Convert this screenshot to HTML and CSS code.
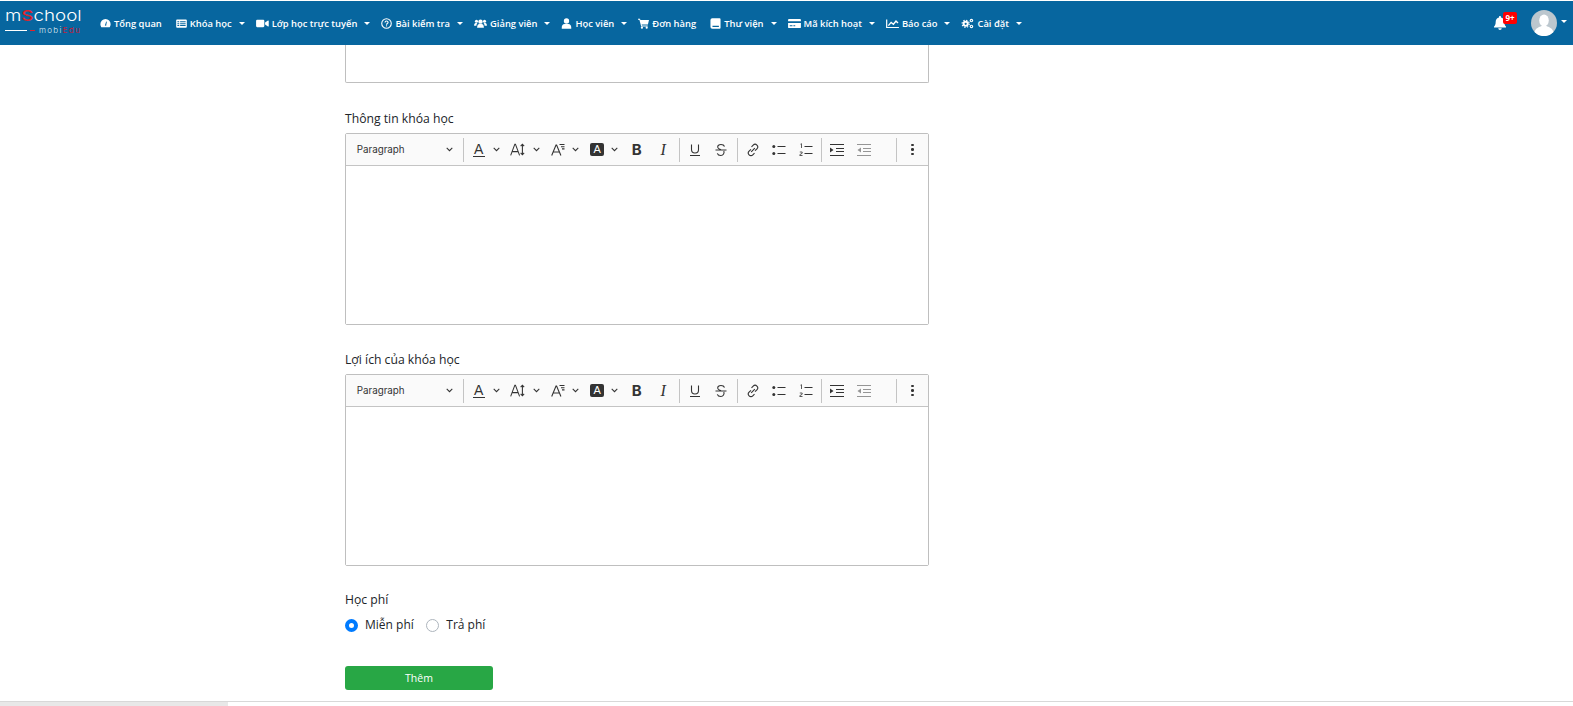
FILE: index.html
```html
<!DOCTYPE html>
<html lang="vi">
<head>
<meta charset="utf-8">
<title>mSchool</title>
<link rel="stylesheet" href="styles.css">
</head>
<body>
<header class="navbar">
  <a class="brand">
    <span class="brand-top">m<b>S</b>chool</span>
    <span class="brand-bottom"><i class="line"></i><i class="dash"></i><span class="mobi">mobi<b>Edu</b></span></span>
  </a>
  <nav class="menu">
    <a class="item"><svg class="ic" viewBox="0 0 12 12"><path d="M6 1.200a5.600 5.600 0 0 0-5.600 5.600c0 1.200.4 2.300 1 3.200h9.200c.6-.9 1-2 1-3.200A5.600 5.600 0 0 0 6 1.200z"/><path class="cut" d="M5.300 8.200 6.800 3.800 7.500 4 6.700 8.500z"/></svg>Tổng quan</a>
    <a class="item caret"><svg class="ic" viewBox="0 0 12 12"><path fill-rule="evenodd" d="M1.200 1.500h9.600a1 1 0 0 1 1 1v7a1 1 0 0 1-1 1H1.200a1 1 0 0 1-1-1v-7a1 1 0 0 1 1-1zM1.500 3.500v1.200h2V3.500zm3 0v1.200h6V3.500zm-3 2.200v1h2v-1zm3 0v1h6v-1zm-3 2v1.100h2V7.700zm3 0v1.100h6V7.700z"/></svg>Khóa học</a>
    <a class="item caret"><svg class="ic wide" viewBox="0 0 14 12"><rect x="0" y="2" width="9" height="8" rx="1.200"/><path d="M9.800 5 13 2.800c.4-.2.800 0 .8.500v5.400c0 .5-.4.700-.8.500L9.800 7z"/></svg>Lớp học trực tuyến</a>
    <a class="item caret"><svg class="ic" viewBox="0 0 12 12"><circle cx="6" cy="6" r="5.200" fill="none" stroke="#fff" stroke-width="1.200"/><path fill="none" stroke="#fff" stroke-width="1.200" d="M4.400 4.900c0-2.100 3.300-2.100 3.300-.1 0 1.200-1.700 1.200-1.700 2.500"/><rect x="5.400" y="8" width="1.200" height="1.200"/></svg>Bài kiểm tra</a>
    <a class="item caret"><svg class="ic wide" viewBox="0 0 14 12"><circle cx="7" cy="4" r="2.400"/><path d="M3.300 10.500c0-2.700 1.200-3.900 2.400-3.900h2.600c1.200 0 2.400 1.200 2.400 3.900z"/><circle cx="2.600" cy="3.600" r="1.700"/><circle cx="11.400" cy="3.600" r="1.700"/><path d="M0 8.500c0-2 .7-3 1.700-3h1.900c-.6.700-1 1.700-1.100 3zM14 8.500c0-2-.7-3-1.700-3h-1.900c.6.700 1 1.700 1.100 3z"/></svg>Giảng viên</a>
    <a class="item caret"><svg class="ic" viewBox="0 0 12 12"><circle cx="6" cy="3.300" r="2.900"/><path d="M.8 11.700c-.3-3.200 1-5.200 3.200-5.200h4c2.200 0 3.500 2 3.200 5.200z"/></svg>Học viên</a>
    <a class="item"><svg class="ic" viewBox="0 0 12 12"><path d="M0 .8h2.200l.4 1.300H12l-1.200 5H4l.3 1h6.300v1.100H3.500L1.500 1.900H0z"/><circle cx="4.300" cy="10.500" r="1.200"/><circle cx="9.500" cy="10.500" r="1.200"/></svg>Đơn hàng</a>
    <a class="item caret"><svg class="ic" viewBox="0 0 12 12"><path fill-rule="evenodd" d="M2.500.3h8a1 1 0 0 1 1 1v9.400a1 1 0 0 1-1 1h-8a2 2 0 0 1-2-2V2.300a2 2 0 0 1 2-2zM2.700 8.500v1.200h7V8.500z"/></svg>Thư viện</a>
    <a class="item caret"><svg class="ic wide" viewBox="0 0 14 12"><path fill-rule="evenodd" d="M1 1h12a1 1 0 0 1 1 1v1.600H0V2a1 1 0 0 1 1-1zM0 5.400h14V10a1 1 0 0 1-1 1H1a1 1 0 0 1-1-1zM1.800 8v1h3V8zm4 0v1h2V8z"/></svg>Mã kích hoạt</a>
    <a class="item caret"><svg class="ic wide" viewBox="0 0 14 12"><path d="M0 1.500h1.300v8.200H14V11H0z"/><path fill="none" stroke="#fff" stroke-width="1.500" d="M2.500 8.300 5.500 4.800l2.500 2 2.800-3.500 2.200 2.200"/></svg>Báo cáo</a>
    <a class="item caret"><svg class="ic wide" viewBox="0 0 14 12"><circle cx="5" cy="6.300" r="3.900" fill="none" stroke="#fff" stroke-width="1.300" stroke-dasharray="1.500 1.560"/><circle cx="5" cy="6.300" r="3.300"/><circle class="cut" cx="5" cy="6.300" r="1.200"/><circle cx="11.300" cy="2.800" r="1.900"/><circle class="cut" cx="11.300" cy="2.800" r=".7"/><circle cx="11.300" cy="9.200" r="1.900"/><circle class="cut" cx="11.300" cy="9.200" r=".7"/></svg>Cài đặt</a>
  </nav>
  <div class="nav-right">
    <span class="bell"><svg viewBox="0 0 14 14"><path d="M7 0c.6 0 1 .4 1 1v.6c2 .4 3.300 2 3.300 4.100 0 3.200 1 4 1.700 4.800v1H1v-1c.7-.8 1.700-1.600 1.700-4.800 0-2.100 1.300-3.700 3.300-4.100V1c0-.6.4-1 1-1z"/><path d="M5.300 12.300h3.400c0 .9-.8 1.600-1.700 1.600s-1.700-.7-1.700-1.600z"/></svg><span class="badge">9+</span></span>
    <span class="avatar"><svg viewBox="0 0 26 26"><circle cx="13" cy="13" r="13" fill="#bcc7ce"/><ellipse cx="13" cy="10.500" rx="4.800" ry="6" fill="#fff"/><path d="M3.500 22c1-4 5-5 7-6h5c2 1 6 2 7 6a13 13 0 0 1-19 0z" fill="#fff"/></svg></span>
    <i class="avatar-caret"></i>
  </div>
</header>

<main class="page">
  <form class="form">
    <div class="stub-box"></div>

    <section class="field">
      <label class="label">Thông tin khóa học</label>
      <div class="editor">
        <div class="toolbar">
          <span class="para">Paragraph<svg class="chev" viewBox="0 0 10 6"><path d="M1 1l4 4 4-4"/></svg></span>
          <i class="sep"></i>
          <span class="tool dd a1"><span class="glyph-a">A</span><svg class="chev" viewBox="0 0 10 6"><path d="M1 1l4 4 4-4"/></svg></span>
          <span class="tool dd a2"><svg class="t" viewBox="0 0 16 13"><path class="s" d="M.7 12.500 5 1h.6l4.300 11.500M2.200 8.700h6.200M12.800 1.500v10M11 3l1.800-2 1.800 2M11 10l1.800 2 1.800-2"/></svg><svg class="chev" viewBox="0 0 10 6"><path d="M1 1l4 4 4-4"/></svg></span>
          <span class="tool dd a3"><svg class="t t3" viewBox="0 0 14 13"><path class="s" d="M.7 12.500 5 2h.6l4.300 10.500M2.200 9h6.200M8.500 1.500h5M10 3.700h3.500M11 5.900h2.500"/></svg><svg class="chev" viewBox="0 0 10 6"><path d="M1 1l4 4 4-4"/></svg></span>
          <span class="tool dd a4"><span class="hl">A</span><svg class="chev" viewBox="0 0 10 6"><path d="M1 1l4 4 4-4"/></svg></span>
          <span class="tool btn b">B</span>
          <span class="tool btn it last">I</span>
          <i class="sep"></i>
          <span class="tool btn"><svg class="t16" viewBox="0 0 14 14"><path class="s" d="M3.500 1.500v5a3.500 3.500 0 0 0 7 0v-5M2 12.500h10"/></svg></span>
          <span class="tool btn last"><svg class="t16" viewBox="0 0 14 14"><path class="s" d="M10.500 3.500C10 2 8.500 1.500 7 1.500c-2 0-3.500 1-3.300 2.800.2 1.500 2.300 2 3.300 2.400M1.500 7h11M9.800 8c.8 2-.5 4.500-3 4.500-1.700 0-3-.7-3.500-2.200"/></svg></span>
          <i class="sep"></i>
          <span class="tool btn"><svg class="t16" viewBox="0 0 14 14"><path class="s" d="M5.500 3.800 7.200 2.100a2.600 2.600 0 0 1 3.700 3.700L9 7.700M8.500 10.200 6.800 11.900a2.600 2.600 0 0 1-3.700-3.700L5 6.300M5.200 8.800 8.800 5.200"/></svg></span>
          <span class="tool btn"><svg class="t16" viewBox="0 0 14 14"><circle cx="1.800" cy="3.500" r="1.500" class="f"/><circle cx="1.800" cy="10.500" r="1.500" class="f"/><path class="s" d="M5.500 3.500h8M5.500 10.500h8"/></svg></span>
          <span class="tool btn last"><svg class="t16" viewBox="0 0 14 14"><path class="s thin" d="M1.500 1.200l1-.5V5M.8 9h2.400l-.1 1.300-2.300 1.400v.8h2.700"/><path class="s" d="M5.500 3.500h8M5.500 10.500h8"/></svg></span>
          <i class="sep"></i>
          <span class="tool btn"><svg class="t16" viewBox="0 0 14 14"><path class="s" d="M0 1.500h14M6 5.500h8M6 8.500h8M0 12.500h14"/><path class="f" d="M0 4.500 3.500 7 0 9.500z"/></svg></span>
          <span class="tool btn dim"><svg class="t16" viewBox="0 0 14 14"><path class="s" d="M0 1.500h14M6 5.500h8M6 8.500h8M0 12.500h14"/><path class="f" d="M4 4.500.5 7 4 9.500z"/></svg></span>
          <span class="grow"></span>
          <i class="sep"></i>
          <span class="more"><i></i><i></i><i></i></span>
        </div>
        <div class="editable"></div>
      </div>
    </section>

    <section class="field">
      <label class="label">Lợi ích của khóa học</label>
      <div class="editor">
        <div class="toolbar">
          <span class="para">Paragraph<svg class="chev" viewBox="0 0 10 6"><path d="M1 1l4 4 4-4"/></svg></span>
          <i class="sep"></i>
          <span class="tool dd a1"><span class="glyph-a">A</span><svg class="chev" viewBox="0 0 10 6"><path d="M1 1l4 4 4-4"/></svg></span>
          <span class="tool dd a2"><svg class="t" viewBox="0 0 16 13"><path class="s" d="M.7 12.500 5 1h.6l4.300 11.500M2.200 8.700h6.200M12.800 1.500v10M11 3l1.800-2 1.800 2M11 10l1.800 2 1.800-2"/></svg><svg class="chev" viewBox="0 0 10 6"><path d="M1 1l4 4 4-4"/></svg></span>
          <span class="tool dd a3"><svg class="t t3" viewBox="0 0 14 13"><path class="s" d="M.7 12.500 5 2h.6l4.300 10.500M2.200 9h6.200M8.500 1.500h5M10 3.700h3.500M11 5.900h2.500"/></svg><svg class="chev" viewBox="0 0 10 6"><path d="M1 1l4 4 4-4"/></svg></span>
          <span class="tool dd a4"><span class="hl">A</span><svg class="chev" viewBox="0 0 10 6"><path d="M1 1l4 4 4-4"/></svg></span>
          <span class="tool btn b">B</span>
          <span class="tool btn it last">I</span>
          <i class="sep"></i>
          <span class="tool btn"><svg class="t16" viewBox="0 0 14 14"><path class="s" d="M3.500 1.500v5a3.500 3.500 0 0 0 7 0v-5M2 12.500h10"/></svg></span>
          <span class="tool btn last"><svg class="t16" viewBox="0 0 14 14"><path class="s" d="M10.500 3.500C10 2 8.500 1.500 7 1.500c-2 0-3.500 1-3.300 2.800.2 1.500 2.300 2 3.300 2.400M1.500 7h11M9.800 8c.8 2-.5 4.500-3 4.500-1.700 0-3-.7-3.500-2.200"/></svg></span>
          <i class="sep"></i>
          <span class="tool btn"><svg class="t16" viewBox="0 0 14 14"><path class="s" d="M5.500 3.800 7.200 2.100a2.600 2.600 0 0 1 3.700 3.700L9 7.700M8.500 10.200 6.800 11.900a2.600 2.600 0 0 1-3.700-3.700L5 6.300M5.200 8.800 8.800 5.200"/></svg></span>
          <span class="tool btn"><svg class="t16" viewBox="0 0 14 14"><circle cx="1.800" cy="3.500" r="1.500" class="f"/><circle cx="1.800" cy="10.500" r="1.500" class="f"/><path class="s" d="M5.500 3.500h8M5.500 10.500h8"/></svg></span>
          <span class="tool btn last"><svg class="t16" viewBox="0 0 14 14"><path class="s thin" d="M1.500 1.200l1-.5V5M.8 9h2.400l-.1 1.300-2.300 1.400v.8h2.700"/><path class="s" d="M5.500 3.500h8M5.500 10.500h8"/></svg></span>
          <i class="sep"></i>
          <span class="tool btn"><svg class="t16" viewBox="0 0 14 14"><path class="s" d="M0 1.500h14M6 5.500h8M6 8.500h8M0 12.500h14"/><path class="f" d="M0 4.500 3.500 7 0 9.500z"/></svg></span>
          <span class="tool btn dim"><svg class="t16" viewBox="0 0 14 14"><path class="s" d="M0 1.500h14M6 5.500h8M6 8.500h8M0 12.500h14"/><path class="f" d="M4 4.500.5 7 4 9.500z"/></svg></span>
          <span class="grow"></span>
          <i class="sep"></i>
          <span class="more"><i></i><i></i><i></i></span>
        </div>
        <div class="editable"></div>
      </div>
    </section>

    <section class="fee">
      <label class="label">Học phí</label>
      <div class="radios">
        <span class="radio on"><i></i>Miễn phí</span>
        <span class="radio"><i></i>Trả phí</span>
      </div>
    </section>

    <button class="submit" type="button">Thêm</button>
  </form>
</main>

<div class="hscroll"><div class="thumb"></div></div>
</body>
</html>
```

FILE: styles.css
```css
* { box-sizing: border-box; }
html, body { margin: 0; height: 706px; overflow: hidden; background: #fff; }
body {
  display: flex;
  flex-direction: column;
  font-family: "Open Sans", "Noto Sans", sans-serif;
  color: #212529;
  padding-top: 1px;
}

.navbar {
  flex: none;
  height: 44px;
  background: #07669f;
  display: flex;
  align-items: center;
  color: #fff;
  padding-left: 5px;
}
.brand { width: 95px; flex: none; display: flex; flex-direction: column; }
.brand-top {
  display: block;
  font-family: "Inter", "Liberation Sans", sans-serif;
  font-weight: 300;
  font-size: 15px;
  line-height: 17px;
  color: #fff;
  margin-top: -3px;
  transform: scaleX(1.25);
  transform-origin: left center;
  white-space: nowrap;
}
.brand-top b { color: #e0242c; font-weight: 500; }
.brand-bottom { display: flex; align-items: center; height: 11px; margin-top: 1px; }
.brand-bottom .line { width: 22px; height: 1px; background: #fff; flex: none; }
.brand-bottom .dash { width: 5px; height: 1px; background: #e0242c; margin-left: 3px; flex: none; }
.mobi { font: 300 8px/11px "Inter", "Liberation Sans", sans-serif; letter-spacing: 1.3px; margin-left: 4px; color: #dfe9f1; }
.mobi b { font-weight: 400; color: #c2203a; }

.menu { display: flex; align-items: center; flex: none; }
.item {
  display: flex;
  align-items: center;
  font-size: 9.4px;
  font-weight: 600;
  white-space: nowrap;
  margin-right: 14px;
}
.item.caret { margin-right: 11px; }
.item.caret::after {
  content: "";
  margin-left: 7px;
  border-top: 3px solid #fff;
  border-left: 3px solid transparent;
  border-right: 3px solid transparent;
}
.ic { width: 11px; height: 11px; margin-right: 3px; fill: #fff; flex: none; }
.ic.wide { width: 13px; }
.ic .cut { fill: #07669f; }

.nav-right { margin-left: auto; display: flex; align-items: center; padding-right: 6px; }
.bell { position: relative; width: 14px; height: 14px; margin-right: 24px; display: block; margin-top: -1px; }
.bell svg { width: 14px; height: 14px; fill: #fff; display: block; }
.badge {
  position: absolute;
  left: 10px;
  top: -4px;
  width: 14px;
  height: 12px;
  border-radius: 2px;
  background: #f00;
  color: #fff;
  font-size: 8px;
  font-weight: 700;
  line-height: 12px;
  text-align: center;
}
.avatar { width: 26px; height: 26px; display: block; flex: none; }
.avatar svg { width: 26px; height: 26px; display: block; }
.avatar-caret {
  margin-left: 4px;
  margin-top: -3px;
  border-top: 3px solid #fff;
  border-left: 3px solid transparent;
  border-right: 3px solid transparent;
}

.page { flex: 1; min-height: 0; overflow: hidden; padding-left: 345px; }
.form { width: 584px; display: flex; flex-direction: column; }
.stub-box {
  height: 38px;
  flex: none;
  border: 1px solid #bfbfbf;
  border-top: 0;
  border-radius: 0 0 2px 2px;
}
.field { margin-top: 24px; }
.stub-box + .field { margin-top: 25px; }
.label {
  display: block;
  font-size: 12.2px;
  line-height: 18px;
  height: 25px;
  padding-top: 2px;
  color: #212529;
}
.editor { height: 192px; border: 1px solid #bfbfbf; border-radius: 2px; display: flex; flex-direction: column; }
.toolbar {
  height: 32px;
  flex: none;
  background: #fafafa;
  border-bottom: 1px solid #c4c4c4;
  display: flex;
  align-items: center;
  padding-left: 10.7px;
  color: #333;
}
.para {
  width: 106px;
  flex: none;
  display: flex;
  align-items: center;
  justify-content: space-between;
  font: 9.8px "Inter", "Liberation Sans", sans-serif;
  color: #333;
  padding-right: 10px;
}
.sep { width: 1px; height: 24px; background: #c4c4c4; flex: none; }
.chev { width: 7px; height: 4.5px; fill: none; stroke: #333; stroke-width: 1.500; flex: none; }
.tool { display: flex; align-items: center; justify-content: center; flex: none; height: 24px; }
.tool.dd { margin-right: 11px; }
.tool.dd .chev { margin-left: 7px; }
.tool.a1 { margin-left: 9px; margin-right: 10px; }
.tool.a1 .chev { margin-left: 8px; }
.tool.a2 .chev { margin-left: 8px; }
.tool.a4 { margin-right: 11.5px; }
.glyph-a {
  font: 14px/14px "Liberation Sans", sans-serif;
  border-bottom: 1px solid #333;
  width: 12px;
  text-align: center;
  height: 15px;
}
.t { width: 15.5px; height: 13px; }
.t3 { width: 14px; }
.t16 { width: 14px; height: 14px; }
.s { fill: none; stroke: #333; stroke-width: 1.100; }
.s.thin { stroke-width: .8; }
.f { fill: #333; }
.hl {
  width: 14px;
  height: 13px;
  flex: none;
  background: #333;
  color: #fff;
  border-radius: 2px;
  font: 11px/13px "Liberation Sans", sans-serif;
  text-align: center;
}
.tool.btn { width: 14px; margin-right: 12.5px; }
.tool.btn.last { margin-right: 8.500px; }
.sep + .tool.btn { margin-left: 8px; }
.b { font: 700 15px "Inter", "Liberation Sans", sans-serif; }
.it { font: italic 16px "Liberation Serif", serif; }
.dim { opacity: .5; }
.grow { flex: 1; }
.more { display: flex; flex-direction: column; align-items: center; gap: 2px; flex: none; width: 31px; }
.more i { width: 2.500px; height: 2.500px; background: #333; border-radius: 50%; }
.editable { flex: 1; background: #fff; }

.fee { margin-top: 23px; }
.fee .label { height: 27px; }
.radios { display: flex; gap: 12.5px; height: 18px; }
.radio { display: flex; align-items: center; font-size: 12px; line-height: 18px; color: #212529; }
.radio i {
  width: 13px;
  height: 13px;
  border-radius: 50%;
  border: 1px solid #adb5bd;
  background: #fff;
  margin-right: 7px;
  flex: none;
}
.radio.on i { border: 4px solid #007bff; }

.submit {
  margin-top: 32px;
  width: 148px;
  height: 24px;
  flex: none;
  border: 0;
  border-radius: 3px;
  background: #28a745;
  color: #fff;
  font: 10.5px "Open Sans", sans-serif;
  padding: 0;
}

.hscroll { flex: none; height: 5px; border-top: 1px solid #d8d8d8; background: #fff; }
.thumb { width: 228px; height: 4px; background: #e8e8e8; }
```
